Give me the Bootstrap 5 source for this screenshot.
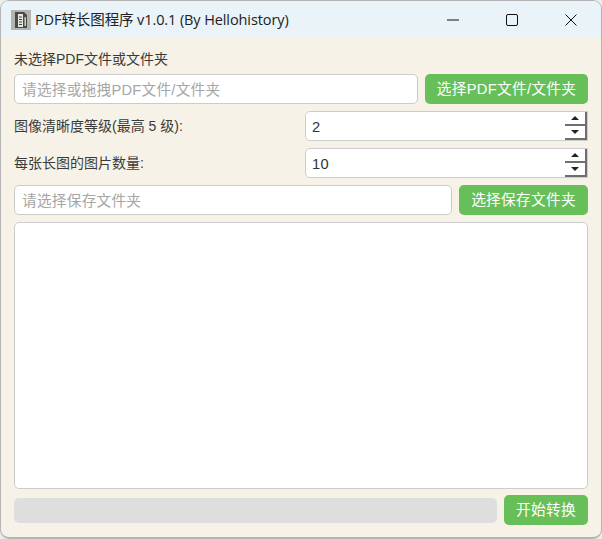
<!DOCTYPE html>
<html lang="zh">
<head>
<meta charset="utf-8">
<title>PDF转长图程序</title>
<link href="https://cdn.jsdelivr.net/npm/bootstrap@5.3.0/dist/css/bootstrap.min.css" rel="stylesheet">
<style>
html,body{height:539px;margin:0;background:#ededed;overflow:hidden}
body,.form-control,.btn{font-family:"Liberation Sans","Noto Sans CJK SC",sans-serif}
.appwin{height:539px;width:602px;background:#f6f2e8;border:1px solid #b4b4b4;border-bottom-width:2px;border-radius:9px;overflow:hidden}
.titlebar{height:37px;background:#e9f3f8;flex:none;padding-right:.5px}
.titlebar .ttl{font-size:14.500px;color:#222;font-family:"Open Sans","Noto Sans CJK SC",sans-serif;letter-spacing:-.1px}
.appicon{width:20px;height:20px;margin:0 4px 0 10px}
.winbtn{width:59px;height:37px}
.content{padding:8px 13px 12px 13px}
.lbl{font-size:14px;color:#3a3a3a;line-height:20px}
.labgap{margin-bottom:5px;margin-top:3px}
.form-control.fld{height:30px;border:1px solid #ccc;border-radius:5px;font-size:14.670px;padding:1px 7px 0;color:#333;letter-spacing:.25px;box-shadow:none}
.form-control.fld::placeholder{color:#a6a6a6}
.btn.gbtn{height:30px;background:#67bf5a;color:#fff;border:0;border-radius:5px;font-size:14.670px;padding:0;letter-spacing:.3px}
.spinbox{width:283px;height:30px;background:#fff;border:1px solid #ccc;border-radius:5px 0 0 5px;overflow:hidden}
.spinbox .form-control.fld{height:28px;border:0;border-radius:0;background:transparent;color:#333;padding-left:6px}
.spins{width:22px;height:28px;flex:none;border-right:2px solid #6e6e6e;border-bottom:1px solid #6e6e6e}
.spins span{height:14px;border-bottom:1px solid #6e6e6e;background:#fff}
.spins span:first-child{border-bottom:2px solid #6e6e6e}
.up{border-left:4px solid transparent;border-right:4px solid transparent;border-bottom:4px solid #222;width:0;height:0}
.dn{border-left:4px solid transparent;border-right:4px solid transparent;border-top:4px solid #222;width:0;height:0}
.logbox{height:267px;border:1px solid #ccc;border-radius:5px;background:#fff}
.pbar{height:25px;background:#dedede;border-radius:5px;margin-right:7px}
.mb7{margin-bottom:7px}
.lastrow{margin-top:6px}
.w404{width:404px}.w163{width:163px}.w438{width:438px}.w129{width:129px}.w84{width:84px}
.lab291{width:291px}
</style>
</head>
<body>
<div class="appwin d-flex flex-column">
  <div class="titlebar d-flex align-items-center">
    <svg class="appicon" viewBox="0 0 20 20"><rect width="20" height="20" fill="#b5b5b0"/><path d="M4 2h9l3 3v13H4z" fill="#4a4a48"/><path d="M7 4h5v13H7z" fill="#e6e6e2"/><path d="M8 7h3M8 9.500h3M8 12h3M8 14.500h3" stroke="#444" stroke-width="1"/><path d="M13.500 7h1.500v9h-1.500z" fill="#cfcfca"/></svg>
    <span class="ttl flex-grow-1">PDF转长图程序 v1.0.1 (By Hellohistory)</span>
    <div class="winbtn d-flex align-items-center justify-content-center"><svg width="12" height="12" viewBox="0 0 12 12"><path d="M0 6h12" stroke="#111" stroke-width="1"/></svg></div>
    <div class="winbtn d-flex align-items-center justify-content-center"><svg width="12" height="12" viewBox="0 0 12 12"><rect x=".5" y=".5" width="11" height="11" rx="1.500" fill="none" stroke="#111" stroke-width="1"/></svg></div>
    <div class="winbtn d-flex align-items-center justify-content-center"><svg width="12" height="12" viewBox="0 0 12 12"><path d="M.5.500l11 11M11.500.500l-11 11" stroke="#111" stroke-width="1"/></svg></div>
  </div>
  <div class="content d-flex flex-column flex-grow-1">
    <div class="lbl labgap">未选择PDF文件或文件夹</div>
    <div class="d-flex justify-content-between mb7">
      <input class="form-control fld w404" placeholder="请选择或拖拽PDF文件/文件夹">
      <button class="btn gbtn w163">选择PDF文件/文件夹</button>
    </div>
    <div class="d-flex align-items-center mb7">
      <div class="lbl lab291">图像清晰度等级(最高 5 级):</div>
      <div class="spinbox d-flex">
        <input class="form-control fld" value="2">
        <div class="spins d-flex flex-column">
          <span class="d-flex align-items-center justify-content-center"><i class="up"></i></span>
          <span class="d-flex align-items-center justify-content-center"><i class="dn"></i></span>
        </div>
      </div>
    </div>
    <div class="d-flex align-items-center mb7">
      <div class="lbl lab291">每张长图的图片数量:</div>
      <div class="spinbox d-flex">
        <input class="form-control fld" value="10">
        <div class="spins d-flex flex-column">
          <span class="d-flex align-items-center justify-content-center"><i class="up"></i></span>
          <span class="d-flex align-items-center justify-content-center"><i class="dn"></i></span>
        </div>
      </div>
    </div>
    <div class="d-flex justify-content-between mb7">
      <input class="form-control fld w438" placeholder="请选择保存文件夹">
      <button class="btn gbtn w129">选择保存文件夹</button>
    </div>
    <div class="logbox"></div>
    <div class="d-flex justify-content-between align-items-center lastrow">
      <div class="pbar flex-grow-1"></div>
      <button class="btn gbtn w84">开始转换</button>
    </div>
  </div>
</div>
<script src="https://cdn.jsdelivr.net/npm/bootstrap@5.3.0/dist/js/bootstrap.bundle.min.js"></script>
</body>
</html>
